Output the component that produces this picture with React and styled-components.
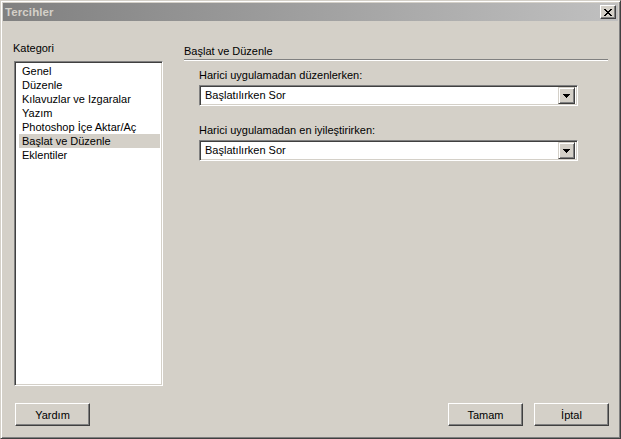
import React from 'react';
import styled, { createGlobalStyle } from 'styled-components';

const Global = createGlobalStyle`
  html, body { margin: 0; padding: 0; background: #d4d0c8; }
  * { box-sizing: border-box; }
`;

const FONT = `Tahoma, "Liberation Sans", "DejaVu Sans", sans-serif`;

const Window = styled.div`
  width: 621px;
  height: 439px;
  background: #d4d0c8;
  border: 1px solid;
  border-color: #d4d0c8 #404040 #404040 #d4d0c8;
  box-shadow: inset 1px 1px 0 #ffffff, inset -1px -1px 0 #808080;
  padding: 2px;
  display: flex;
  flex-direction: column;
  font-family: ${FONT};
  font-size: 11px;
  color: #000;
`;

const TitleBar = styled.div`
  height: 18px;
  flex: none;
  display: flex;
  align-items: center;
  justify-content: space-between;
  padding: 0 2px 0 2px;
  background: linear-gradient(to right, #808080, #c0c0c0);
`;

const TitleText = styled.span`
  color: #d4d0c8;
  font-weight: bold;
  font-size: 11.5px;
  letter-spacing: 0.1px;
`;

const CloseButton = styled.div`
  width: 16px;
  height: 14px;
  background: #d4d0c8;
  border: 1px solid;
  border-color: #ffffff #404040 #404040 #ffffff;
  box-shadow: inset -1px -1px 0 #808080;
  display: flex;
  align-items: center;
  justify-content: center;
  padding-right: 1px;
`;

const Body = styled.div`
  flex: 1;
  display: flex;
  padding: 21px 10px 0 10px;
  gap: 21px;
`;

const LeftColumn = styled.div`
  width: 150px;
  display: flex;
  flex-direction: column;
`;

const Label = styled.div`
  height: 13px;
  line-height: 13px;
  white-space: nowrap;
  margin-bottom: ${p => p.$gap || 0}px;
`;

const Sunken = styled.div`
  background: #ffffff;
  border: 1px solid;
  border-color: #808080 #ffffff #ffffff #808080;
  box-shadow: inset 1px 1px 0 #404040, inset -1px -1px 0 #d4d0c8;
  padding: 2px;
`;

const ListBox = styled(Sunken)`
  margin-left: 1px;
  width: 149px;
  height: 325px;
  padding: 2px 2px 2px 4px;
`;

const ListItem = styled.div`
  height: 14px;
  line-height: 14px;
  padding-left: 3px;
  white-space: nowrap;
  background: ${p => (p.$selected ? '#d4d0c8' : 'transparent')};
`;

const RightColumn = styled.div`
  flex: 1;
  display: flex;
  flex-direction: column;
  padding-top: 3px;
`;

const SectionHeader = styled.div`
  height: 15px;
  line-height: 13px;
  border-bottom: 1px solid #808080;
  box-shadow: 0 1px 0 #ffffff;
  margin-bottom: 9px;
`;

const Field = styled.div`
  display: flex;
  flex-direction: column;
  padding-left: 15px;
  width: 394px;
  margin-bottom: ${p => p.$gap || 0}px;
`;

const Combo = styled(Sunken)`
  height: 21px;
  margin-top: 3px;
  display: flex;
  align-items: center;
  justify-content: space-between;
  padding: 2px 2px 2px 5px;
`;

const ComboValue = styled.span`
  white-space: nowrap;
  line-height: 13px;
`;

const DropButton = styled.div`
  width: 17px;
  height: 17px;
  flex: none;
  background: #d4d0c8;
  border: 1px solid;
  border-color: #d4d0c8 #404040 #404040 #d4d0c8;
  box-shadow: inset 1px 1px 0 #ffffff, inset -1px -1px 0 #808080;
  display: flex;
  align-items: center;
  justify-content: center;
`;

const Footer = styled.div`
  flex: none;
  display: flex;
  align-items: flex-start;
  padding: 0 9px 10px 12px;
`;

const Button = styled.div`
  width: 75px;
  height: 23px;
  background: #d4d0c8;
  border: 1px solid;
  border-color: #ffffff #404040 #404040 #ffffff;
  box-shadow: inset -1px -1px 0 #808080;
  display: flex;
  align-items: center;
  justify-content: center;
  margin-left: ${p => p.$ml || 0}px;
`;

const Spacer = styled.div`
  flex: 1;
`;

const CloseIcon = () => (
  <svg width="8" height="7" viewBox="0 0 8 7" shapeRendering="crispEdges">
    <path
      fill="#000"
      d="M0 0h2v1h1v1h2v-1h1v-1h2v1h-1v1h-1v1h-1v1h1v1h1v1h1v1h-2v-1h-1v-1h-2v1h-1v1h-2v-1h1v-1h1v-1h1v-1h-1v-1h-1v-1h-1z"
    />
  </svg>
);

const ArrowIcon = () => (
  <svg width="7" height="4" viewBox="0 0 7 4" shapeRendering="crispEdges">
    <path fill="#000" d="M0 0h7v1h-1v1h-1v1h-1v1h-1v-1h-1v-1h-1v-1h-1z" />
  </svg>
);

const categories = [
  'Genel',
  'Düzenle',
  'Kılavuzlar ve Izgaralar',
  'Yazım',
  'Photoshop İçe Aktar/Aç',
  'Başlat ve Düzenle',
  'Eklentiler',
];

export default function App() {
  return (
    <>
      <Global />
      <Window>
        <TitleBar>
          <TitleText>Tercihler</TitleText>
          <CloseButton>
            <CloseIcon />
          </CloseButton>
        </TitleBar>
        <Body>
          <LeftColumn>
            <Label $gap={6}>Kategori</Label>
            <ListBox>
              {categories.map(c => (
                <ListItem key={c} $selected={c === 'Başlat ve Düzenle'}>
                  {c}
                </ListItem>
              ))}
            </ListBox>
          </LeftColumn>
          <RightColumn>
            <SectionHeader>Başlat ve Düzenle</SectionHeader>
            <Field $gap={18}>
              <Label>Harici uygulamadan düzenlerken:</Label>
              <Combo>
                <ComboValue>Başlatılırken Sor</ComboValue>
                <DropButton>
                  <ArrowIcon />
                </DropButton>
              </Combo>
            </Field>
            <Field>
              <Label>Harici uygulamadan en iyileştirirken:</Label>
              <Combo>
                <ComboValue>Başlatılırken Sor</ComboValue>
                <DropButton>
                  <ArrowIcon />
                </DropButton>
              </Combo>
            </Field>
          </RightColumn>
        </Body>
        <Footer>
          <Button>Yardım</Button>
          <Spacer />
          <Button>Tamam</Button>
          <Button $ml={11}>İptal</Button>
        </Footer>
      </Window>
    </>
  );
}
